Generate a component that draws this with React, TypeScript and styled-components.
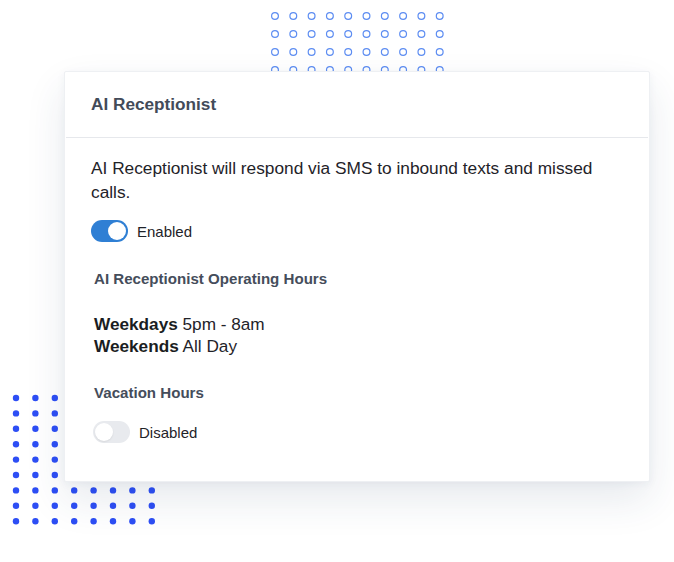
import * as React from 'react';
import styled, { createGlobalStyle } from 'styled-components';

//#######
// Style
//#######
const GlobalStyle = createGlobalStyle`
  html, body {
    margin: 0;
    padding: 0;
    background: #ffffff;
  }
  body {
    font-family: "Liberation Sans", Arial, sans-serif;
    -webkit-font-smoothing: antialiased;
  }
`;

const StyledPage = styled.div`
  position: relative;
  width: 674px;
  height: 562px;
  overflow: hidden;
  padding: 71px 0 0 64px;
  box-sizing: border-box;
  background: #ffffff;
`;

const StyledDecor = styled.svg<{ $left: number; $top: number }>`
  position: absolute;
  left: ${(props) => props.$left}px;
  top: ${(props) => props.$top}px;
  z-index: 0;
`;

const StyledCard = styled.section`
  position: relative;
  z-index: 1;
  width: 586px;
  height: 411px;
  box-sizing: border-box;
  background: #ffffff;
  border: 1px solid #eef0f3;
  border-radius: 2px;
  box-shadow: 0 18px 40px rgba(40, 60, 100, 0.11), 0 2px 8px rgba(40, 60, 100, 0.05);
  display: flex;
  flex-direction: column;
`;

const StyledCardHeader = styled.header`
  height: 65px;
  display: flex;
  align-items: center;
  padding: 0 25px;
  font-size: 17.2px;
  font-weight: 700;
  color: #434b59;
  border-bottom: 1px solid #e6e8ec;
  margin: 0 1px;
`;

const StyledCardBody = styled.div`
  padding: 18px 26px 0 26px;
  display: flex;
  flex-direction: column;
  align-items: flex-start;
`;

const StyledText = styled.p`
  margin: 0;
  width: 525px;
  font-size: 17.3px;
  line-height: 24px;
  color: #1f2329;
`;

const StyledToggleRow = styled.label<{ $indent?: number; $top: number }>`
  display: flex;
  align-items: center;
  gap: 9px;
  margin: ${(props) => props.$top}px 0 0 ${(props) => props.$indent ?? 0}px;
  font-size: 15px;
  color: #1f2329;
`;

const StyledTrack = styled.span<{ $on: boolean }>`
  position: relative;
  display: inline-block;
  width: 37px;
  height: 22px;
  border-radius: 11px;
  background: ${(props) => (props.$on ? '#2f7fd4' : '#e8eaee')};
`;

const StyledKnob = styled.span<{ $on: boolean }>`
  position: absolute;
  top: 2px;
  left: ${(props) => (props.$on ? '17px' : '2px')};
  width: 18px;
  height: 18px;
  border-radius: 50%;
  background: #ffffff;
  box-shadow: ${(props) => (props.$on ? 'none' : '0 1px 2px rgba(0, 0, 0, 0.08)')};
`;

const StyledSubHeading = styled.h3<{ $top: number }>`
  margin: ${(props) => props.$top}px 0 0 3px;
  font-size: 15.1px;
  line-height: 20px;
  font-weight: 700;
  color: #454d5b;
`;

const StyledHours = styled.div`
  margin: 24px 0 0 3px;
  font-size: 17.2px;
  line-height: 22px;
  color: #1f2329;
  strong {
    font-weight: 700;
    color: #1a1d22;
  }
`;

//#############################################################
// Constants, Variables & Functions defined outside components
//#############################################################
type ToggleProps = {
  on: boolean;
  label: string;
  indent?: number;
  top: number;
};

const Toggle = ({ on, label, indent, top }: ToggleProps) => (
  <StyledToggleRow $indent={indent} $top={top}>
    <StyledTrack $on={on}>
      <StyledKnob $on={on} />
    </StyledTrack>
    {label}
  </StyledToggleRow>
);

const RingDots = () => {
  const cols = 10;
  const rows = 4;
  const items = [];
  for (let r = 0; r < rows; r++) {
    for (let c = 0; c < cols; c++) {
      items.push(
        <circle
          key={`${r}-${c}`}
          cx={5 + c * 18.3}
          cy={5 + r * 18}
          r={3.4}
          fill="none"
          stroke="#5d8df2"
          strokeWidth={1.2}
        />
      );
    }
  }
  return (
    <StyledDecor $left={270} $top={11} width={180} height={70}>
      {items}
    </StyledDecor>
  );
};

const FilledDots = () => {
  const cols = 8;
  const rows = 9;
  const items = [];
  for (let r = 0; r < rows; r++) {
    for (let c = 0; c < cols; c++) {
      items.push(
        <circle
          key={`${r}-${c}`}
          cx={4 + c * 19.4}
          cy={4 + r * 15.4}
          r={3.2}
          fill="#2d4ef5"
        />
      );
    }
  }
  return (
    <StyledDecor $left={12} $top={394} width={160} height={132}>
      {items}
    </StyledDecor>
  );
};

//###############
// App component
//###############
const App = () => {
  return (
    <>
      <GlobalStyle />
      <StyledPage>
        <RingDots />
        <FilledDots />
        <StyledCard>
          <StyledCardHeader>AI Receptionist</StyledCardHeader>
          <StyledCardBody>
            <StyledText>
              AI Receptionist will respond via SMS to inbound texts and missed calls.
            </StyledText>
            <Toggle on label="Enabled" top={16} />
            <StyledSubHeading $top={27}>AI Receptionist Operating Hours</StyledSubHeading>
            <StyledHours>
              <div>
                <strong>Weekdays</strong> 5pm - 8am
              </div>
              <div>
                <strong>Weekends</strong> All Day
              </div>
            </StyledHours>
            <StyledSubHeading $top={26}>Vacation Hours</StyledSubHeading>
            <Toggle on={false} label="Disabled" indent={2} top={18} />
          </StyledCardBody>
        </StyledCard>
      </StyledPage>
    </>
  );
};

export default App;
